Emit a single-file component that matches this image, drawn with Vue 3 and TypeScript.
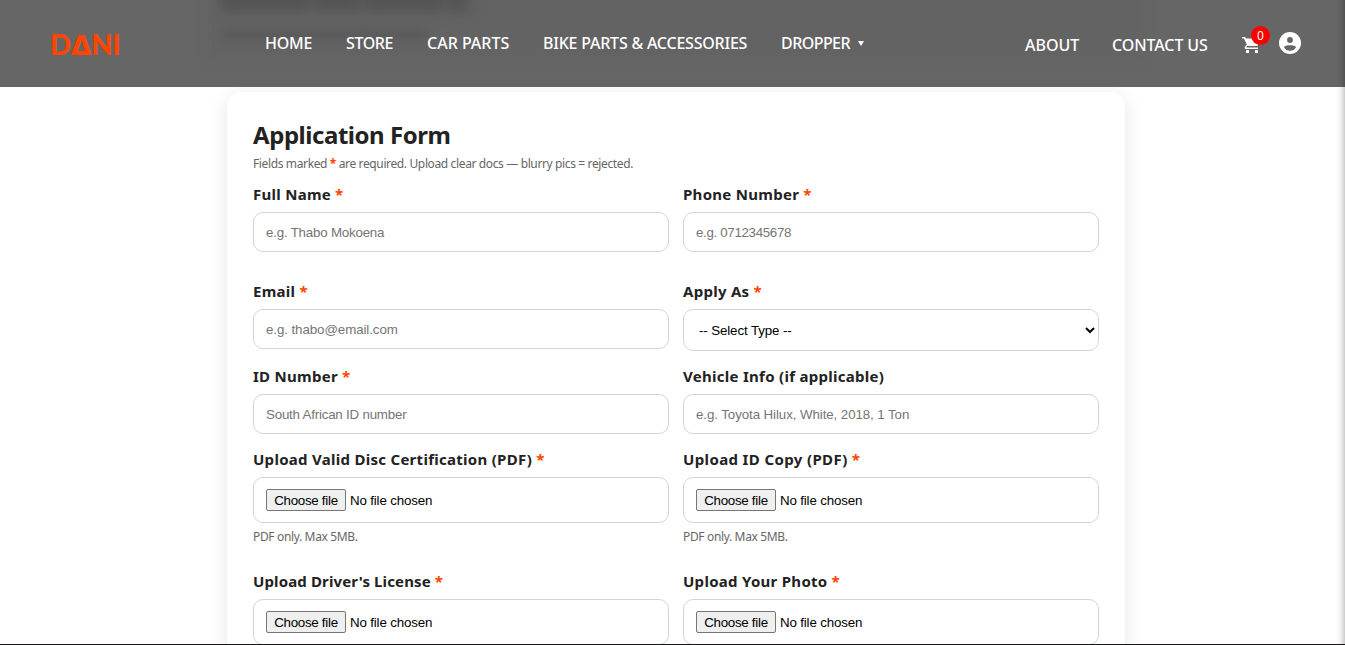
<script setup lang="ts">
interface NavItem { label: string; cls: string }
interface Field {
  label: string
  cls: string
  required: boolean
  kind: 'text' | 'select' | 'file'
  placeholder?: string
  inputCls?: string
  help?: string
}

const mainNav: NavItem[] = [
  { label: 'HOME', cls: 'n-home' },
  { label: 'STORE', cls: 'n-store' },
  { label: 'CAR PARTS', cls: 'n-car' },
  { label: 'BIKE PARTS & ACCESSORIES', cls: 'n-bike' },
]

const fields: Field[] = [
  { label: 'Full Name', cls: 'l-name', required: true, kind: 'text', placeholder: 'e.g. Thabo Mokoena', inputCls: 'i-name' },
  { label: 'Phone Number', cls: 'l-phone', required: true, kind: 'text', placeholder: 'e.g. 0712345678', inputCls: 'i-phone' },
  { label: 'Email', cls: 'l-email', required: true, kind: 'text', placeholder: 'e.g. thabo@email.com', inputCls: 'i-email' },
  { label: 'Apply As', cls: 'l-apply', required: true, kind: 'select' },
  { label: 'ID Number', cls: 'l-id', required: true, kind: 'text', placeholder: 'South African ID number', inputCls: 'i-id' },
  { label: 'Vehicle Info (if applicable)', cls: 'l-vehicle', required: false, kind: 'text', placeholder: 'e.g. Toyota Hilux, White, 2018, 1 Ton', inputCls: 'i-vehicle' },
  { label: 'Upload Valid Disc Certification (PDF)', cls: 'l-disc', required: true, kind: 'file', help: 'PDF only. Max 5MB.' },
  { label: 'Upload ID Copy (PDF)', cls: 'l-copy', required: true, kind: 'file', help: 'PDF only. Max 5MB.' },
  { label: "Upload Driver's License", cls: 'l-license', required: true, kind: 'file' },
  { label: 'Upload Your Photo', cls: 'l-photo', required: true, kind: 'file' },
]
</script>

<template>
  <div class="page">
    <header class="header">
      <div class="ghost ghost-panel"></div>
      <div class="ghost ghost-title"><i class="w1"></i><i class="w2"></i><i class="w3"></i><i class="w4"></i></div>
      <div class="ghost ghost-sub"></div>
      <div class="logo">D<span class="delta">Δ</span>NI</div>
      <nav class="nav">
        <a v-for="n in mainNav" :key="n.label" :class="n.cls">{{ n.label }}</a>
        <a class="n-drop"><span>DROPPER</span><i class="caret"></i></a>
      </nav>
      <div class="side">
        <a class="n-about">ABOUT</a>
        <a class="n-contact">CONTACT US</a>
        <div class="cart">
          <svg width="18" height="18" viewBox="0 0 18 18" fill="#fff">
            <path d="M0 1H3.200L4 2.500H18L15.500 10H5.500L2 2.600H0z" />
            <path d="M5.200 9.500 4.300 11.400H16V13H3.200L2.600 11.600 4.600 8.500z" />
            <rect x="4" y="14" width="3" height="3" rx=".5" />
            <rect x="13" y="14" width="3" height="3" rx=".5" />
          </svg>
          <span class="badge">0</span>
        </div>
        <svg class="user" width="22" height="22" viewBox="0 0 22 22">
          <circle cx="11" cy="11" r="11" fill="#fff" />
          <circle cx="11" cy="8" r="2.9" fill="#666" />
          <path d="M5 15.200c.5-1.400 3-2 6-2s5.500.6 6 2c-1.200 2.400-3.300 3.600-6 3.600s-4.800-1.200-6-3.600z" fill="#666" />
        </svg>
      </div>
    </header>

    <main class="card">
      <h2>Application Form</h2>
      <p class="note">Fields marked <b>*</b> are required. Upload clear docs — blurry pics = rejected.</p>
      <form class="grid">
        <div v-for="f in fields" :key="f.label" class="field">
          <label :class="f.cls">{{ f.label }}<em v-if="f.required">*</em></label>
          <input v-if="f.kind === 'text'" type="text" :class="f.inputCls" :placeholder="f.placeholder" />
          <select v-else-if="f.kind === 'select'">
            <option>-- Select Type --</option>
          </select>
          <div v-else class="file">
            <button type="button">Choose file</button>
            <span>No file chosen</span>
          </div>
          <small v-if="f.help">{{ f.help }}</small>
        </div>
      </form>
    </main>
    <div class="edge-right"></div>
    <div class="edge-bottom"></div>
  </div>
</template>

<style>
html, body { margin: 0; overflow: hidden; background: #fff; }
</style>

<style scoped>
* { box-sizing: border-box; }
.page {
  position: relative;
  width: 1345px;
  height: 645px;
  overflow: hidden;
  background: #fff;
  font-family: "Noto Sans", "Open Sans", sans-serif;
  color: #222;
}
.header {
  position: relative;
  z-index: 2;
  display: flex;
  height: 87px;
  background: #666;
  overflow: hidden;
  color: #fff;
}
.ghost { position: absolute; }
.ghost-panel { left: 205px; top: -40px; width: 942px; height: 102px; background: #636363; filter: blur(6px); }
.ghost-title { left: 220px; top: -12px; display: flex; gap: 4px; filter: blur(6px); }
.ghost-title i { height: 24px; background: #545454; }
.w1 { width: 89px; }
.w2 { width: 48px; }
.w3 { width: 78px; }
.w4 { width: 22px; }
.ghost-sub { left: 222px; top: 30px; width: 204px; height: 9px; background: #585858; filter: blur(5px); }
.logo {
  position: relative;
  flex: none;
  width: 264px;
  padding-left: 50px;
  padding-top: 27px;
  font: 900 27.500px/36px "Lato", "Noto Sans", sans-serif;
  letter-spacing: -0.3px;
  color: #ff4500;
  white-space: nowrap;
}
.delta { font-family: "DejaVu Sans", sans-serif; font-weight: 700; font-size: 27px; line-height: 1; }
.nav, .side { position: relative; flex: none; display: flex; white-space: nowrap; font-size: 16px; font-weight: 500; line-height: 20px; }
.nav { padding-top: 33px; margin-left: 1px; }
.n-home { width: 81px; letter-spacing: -0.2px; }
.n-store { width: 81px; letter-spacing: -0.4px; }
.n-car { width: 116px; }
.n-bike { width: 238px; letter-spacing: -0.22px; }
.n-drop { width: 84px; height: 20px; display: flex; align-items: center; gap: 8px; letter-spacing: -0.55px; }
.caret { border: 3px solid transparent; border-top: 5px solid #fff; border-bottom: 0; }
.side { margin-left: 160px; padding-top: 35px; }
.n-about { width: 87px; }
.n-contact { width: 130px; letter-spacing: -0.1px; }
.cart { position: relative; width: 37px; height: 20px; padding-top: 1px; }
.cart svg { display: block; }
.badge {
  position: absolute;
  left: 9px;
  top: -9px;
  width: 19px;
  height: 19px;
  border-radius: 50%;
  background: #f00;
  font-size: 12px;
  font-weight: 400;
  line-height: 19px;
  text-align: center;
}
.user { margin-top: -3px; }
.card {
  width: 898px;
  height: 620px;
  margin: 5px 0 0 227px;
  padding: 25px 26px;
  border-radius: 14px;
  background: #fff;
  box-shadow: 0 4px 20px rgba(0, 0, 0, 0.1);
}
h2 { margin: 0; font-size: 24px; line-height: 35px; font-weight: 700; letter-spacing: -0.45px; white-space: nowrap; }
.note { margin: 3px 0 0; height: 29px; font-size: 12px; line-height: 18px; letter-spacing: -0.37px; color: #666; white-space: nowrap; }
.note b, em { color: #ff4500; font-style: normal; }
em { margin-left: 4px; letter-spacing: 0; }
.grid { display: grid; grid-template-columns: 416px 416px; grid-template-rows: 97px 85px 83px 122px 100px; column-gap: 14px; }
.field { padding-top: 1px; }
label { display: block; height: 21px; margin-bottom: 6px; font-size: 15px; line-height: 18px; font-weight: 700; letter-spacing: 0.28px; white-space: nowrap; }
.l-license { letter-spacing: 0.13px; }
.l-copy { letter-spacing: 0.37px; }
input, select, .file { display: block; width: 416px; border: 1px solid #d5d5d5; border-radius: 10px; background: #fff; font: 13.333px "Liberation Sans", Arial, sans-serif; outline: 0; }
input { height: 40px; padding: 0 12px; }
input::placeholder { color: #757575; opacity: 1; }
.i-name, .i-id { letter-spacing: -0.21px; }
.i-phone { letter-spacing: -0.33px; }
.i-email, .i-vehicle { letter-spacing: -0.09px; }
select { height: 42px; padding: 0 0 0 11px; color: #000; letter-spacing: -0.12px; }
.file { display: flex; align-items: center; gap: 4px; height: 46px; padding: 0 12px; color: #000; letter-spacing: -0.16px; }
button { width: 80px; height: 22px; padding: 0; border: 1px solid #767676; border-radius: 2px; background: #efefef; color: #000; font: inherit; letter-spacing: -0.28px; }
small { display: block; margin-top: 5px; font-size: 12px; line-height: 18px; letter-spacing: -0.35px; color: #666; }
.edge-right { position: absolute; z-index: 3; right: 0; top: 0; width: 9px; height: 645px; background: linear-gradient(to right, rgba(0, 0, 0, 0), rgba(0, 0, 0, 0.05) 50%, rgba(0, 0, 0, 0.2)); }
.edge-bottom { position: absolute; z-index: 4; left: 0; bottom: 0; width: 1345px; height: 1px; background: #1c1518; }
</style>
